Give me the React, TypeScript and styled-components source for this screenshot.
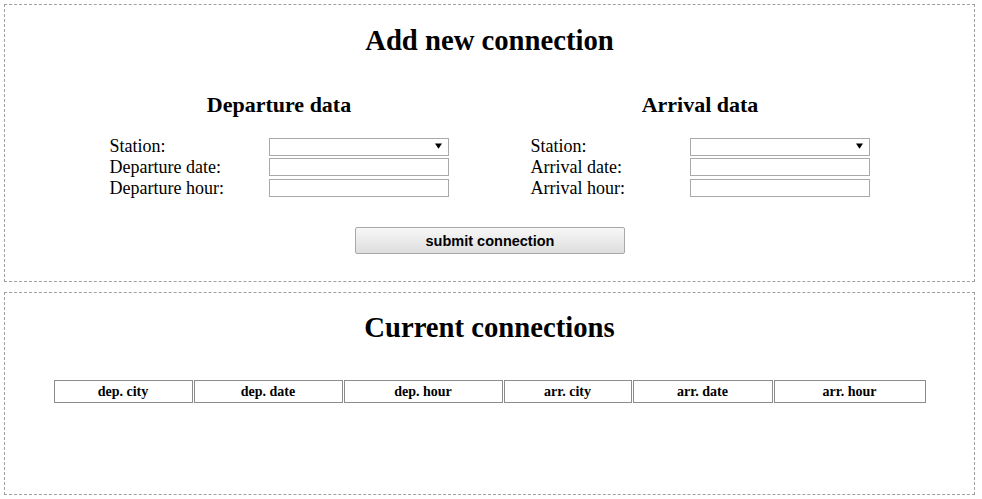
import styled, { createGlobalStyle } from "styled-components";

const GlobalStyle = createGlobalStyle`
  html, body {
    margin: 0;
    padding: 0;
    background: #ffffff;
    font-family: "Liberation Serif", "Times New Roman", serif;
    color: #000000;
  }
`;

const departureFields = ["Departure date:", "Departure hour:"];
const arrivalFields = ["Arrival date:", "Arrival hour:"];
const columns = [
  { label: "dep. city", width: 139 },
  { label: "dep. date", width: 149 },
  { label: "dep. hour", width: 159 },
  { label: "arr. city", width: 128 },
  { label: "arr. date", width: 140 },
  { label: "arr. hour", width: 152 },
];

const FormSection = ({ title, fields }: { title: string; fields: string[] }) => (
  <Section>
    <SectionTitle>{title}</SectionTitle>
    <Fields>
      <Label>Station:</Label>
      <SelectWrap>
        <Select defaultValue="" />
        <Arrow viewBox="0 0 8 6">
          <path d="M0 0 L8 0 L4 6 Z" fill="#000" />
        </Arrow>
      </SelectWrap>
      {fields.map((f) => (
        <Row key={f}>
          <Label>{f}</Label>
          <Input type="text" />
        </Row>
      ))}
    </Fields>
  </Section>
);

const App = () => {
  return (
    <Page>
      <GlobalStyle />
      <Panel $height={278}>
        <Title $top={19}>Add new connection</Title>
        <Columns>
          <FormSection title="Departure data" fields={departureFields} />
          <FormSection title="Arrival data" fields={arrivalFields} />
        </Columns>
        <ButtonRow>
          <Submit type="button">submit connection</Submit>
        </ButtonRow>
      </Panel>
      <Panel $height={203}>
        <Title $top={18}>Current connections</Title>
        <Table>
          <colgroup>
            {columns.map((c) => (
              <col key={c.label} style={{ width: c.width }} />
            ))}
          </colgroup>
          <thead>
            <tr>
              {columns.map((c) => (
                <Th key={c.label}>{c.label}</Th>
              ))}
            </tr>
          </thead>
        </Table>
      </Panel>
    </Page>
  );
};

const Page = styled.div`
  padding: 4px 7px 4px 4px;
  display: flex;
  flex-direction: column;
  gap: 10px;
`;

const Panel = styled.div<{ $height: number }>`
  box-sizing: border-box;
  height: ${({ $height }) => $height}px;
  border: 1px dashed #a0a0a0;
  display: flex;
  flex-direction: column;
  align-items: center;
`;

const Title = styled.h1<{ $top: number }>`
  margin: ${({ $top }) => $top}px 0 0;
  font-size: 28.7px;
  line-height: 32px;
  font-weight: bold;
`;

const Columns = styled.div`
  display: flex;
  gap: 82px;
  margin-top: 37px;
`;

const Section = styled.div`
  width: 339px;
  display: flex;
  flex-direction: column;
  align-items: center;
`;

const SectionTitle = styled.h3`
  margin: 0 0 20px;
  font-size: 22px;
  line-height: 24px;
  font-weight: bold;
`;

const Fields = styled.div`
  width: 100%;
  display: grid;
  grid-template-columns: 159px 180px;
  grid-auto-rows: 18px;
  row-gap: 3px;
  align-items: center;
`;

const Row = styled.div`
  display: contents;
`;

const Label = styled.span`
  font-size: 18px;
  line-height: 18px;
`;

const SelectWrap = styled.div`
  position: relative;
  height: 18px;
`;

const Select = styled.select`
  appearance: none;
  box-sizing: border-box;
  width: 180px;
  height: 18px;
  margin: 0;
  border: 1px solid #a9a9a9;
  background: #ffffff;
  border-radius: 0;
`;

const Arrow = styled.svg`
  position: absolute;
  right: 7px;
  top: 6px;
  width: 7px;
  height: 6px;
  pointer-events: none;
`;

const Input = styled.input`
  box-sizing: border-box;
  width: 180px;
  height: 18px;
  margin: 0;
  padding: 0 2px;
  border: 1px solid #a9a9a9;
  border-radius: 0;
`;

const ButtonRow = styled.div`
  margin-top: 30px;
  display: flex;
  justify-content: center;
`;

const Submit = styled.button`
  box-sizing: border-box;
  width: 270px;
  height: 27px;
  margin-left: 1px;
  border: 1px solid #a8a8a8;
  border-radius: 2px;
  background: linear-gradient(#f7f7f7, #dedede);
  font-family: "Liberation Sans", Arial, sans-serif;
  font-weight: bold;
  font-size: 14.5px;
  color: #000000;
  padding: 0;
`;

const Table = styled.table`
  margin-top: 36px;
  table-layout: fixed;
  width: 874px;
  border-collapse: separate;
  border-spacing: 1px;
`;

const Th = styled.th`
  box-sizing: border-box;
  height: 23px;
  padding: 0;
  border: 1px solid #8c8c8c;
  font-size: 14px;
  font-weight: bold;
  text-align: center;
`;

export default App;
